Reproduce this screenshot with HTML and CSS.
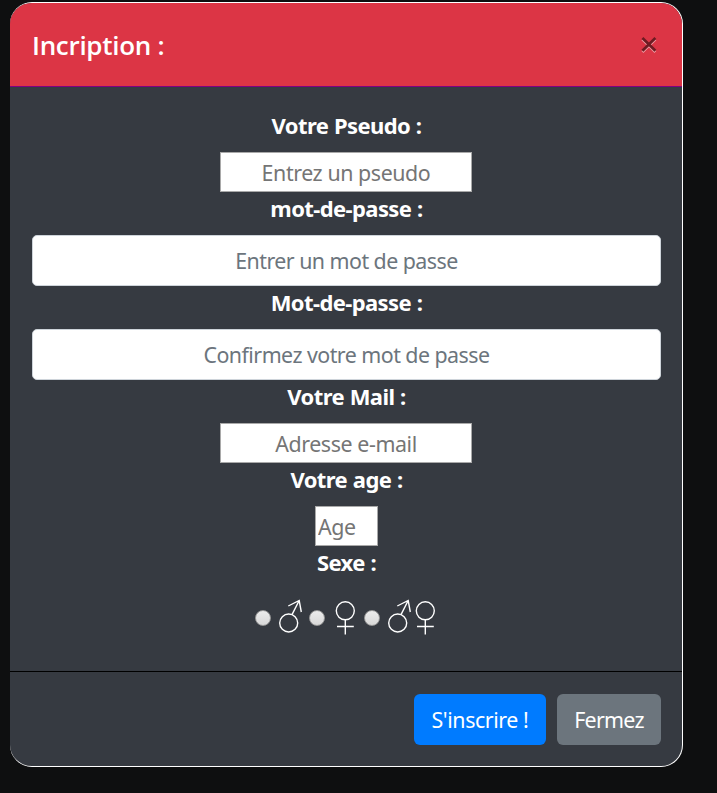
FILE: index.html
```html
<!DOCTYPE html>
<html lang="fr">
<head>
<meta charset="utf-8">
<title>Inscription</title>
<link rel="stylesheet" href="styles.css">
</head>
<body>
<form class="modal">
  <header class="modal-header">
    <h1 class="title">Incription :</h1>
    <button type="button" class="close" aria-label="Fermer">
      <svg width="18" height="18" viewBox="0 0 18 18"><path class="close-shade" d="M2.4 3.3 15.4 16M15.4 3.3 2.4 16"/><path class="close-cross" d="M2.4 2 15.4 14.7M15.4 2 2.4 14.7"/></svg>
    </button>
  </header>
  <div class="modal-body">
    <label class="label" for="pseudo">Votre Pseudo :</label>
    <input class="plain" id="pseudo" type="text" placeholder="Entrez un pseudo">
    <label class="label" for="pass">mot-de-passe :</label>
    <input class="control" id="pass" type="password" placeholder="Entrer un mot de passe">
    <label class="label" for="confirm">Mot-de-passe :</label>
    <input class="control" id="confirm" type="password" placeholder="Confirmez votre mot de passe">
    <label class="label" for="mail">Votre Mail :</label>
    <input class="plain" id="mail" type="email" placeholder="Adresse e-mail">
    <label class="label" for="age">Votre age :</label>
    <input class="plain age" id="age" type="text" placeholder="Age">
    <span class="label">Sexe :</span>
    <div class="choices">
      <input class="radio" type="radio" name="sexe" aria-label="Homme">
      <svg class="male" width="24" height="36" viewBox="0 0 24 36"><path d="M13 15.6 20.2 1.5M9.3 7 20.2 1.5 22.3 13"/><circle cx="9.7" cy="24" r="9"/></svg>
      <input class="radio" type="radio" name="sexe" aria-label="Femme">
      <svg class="female" width="20" height="36" viewBox="0 0 20 36"><circle cx="10.3" cy="11.8" r="9"/><path d="M10.3 20.8V35.5M2 27.5H18.8"/></svg>
      <input class="radio third" type="radio" name="sexe" aria-label="Autre">
      <svg class="male" width="24" height="36" viewBox="0 0 24 36"><path d="M13 15.6 20.2 1.5M9.3 7 20.2 1.5 22.3 13"/><circle cx="9.7" cy="24" r="9"/></svg>
      <svg class="female paired" width="20" height="36" viewBox="0 0 20 36"><circle cx="10.3" cy="11.8" r="9"/><path d="M10.3 20.8V35.5M2 27.5H18.8"/></svg>
    </div>
  </div>
  <footer class="modal-footer">
    <button class="btn primary" type="button">S'inscrire !</button>
    <button class="btn secondary" type="button">Fermez</button>
  </footer>
</form>
</body>
</html>
```
FILE: styles.css
```css
* { box-sizing: border-box; }
body {
  margin: 0;
  height: 793px;
  padding: 2px 34px 0 10px;
  overflow: hidden;
  background: #0e0f10;
  color: #fff;
  font-family: "Noto Sans", "Open Sans", sans-serif;
  font-size: 22px;
}
input, button {
  font: inherit;
  font-size: 21.4px;
  letter-spacing: -0.42px;
}
.modal {
  display: flex;
  flex-direction: column;
  width: 673px;
  height: 765px;
  border: 1px solid #fff;
  border-left-width: 0;
  border-radius: 22px;
  overflow: hidden;
  background: #363a41;
}
.modal-header {
  display: flex;
  justify-content: space-between;
  align-items: center;
  height: 84px;
  padding: 0 22px;
  border-bottom: 1px solid #800080;
  background: #dc3545;
}
.title {
  margin: 0;
  font-family: "Open Sans", sans-serif;
  font-size: 26px;
  font-weight: 600;
  line-height: 40px;
  letter-spacing: -0.3px;
}
.close { display: flex; padding: 0; border: 0; background: none; margin-right: 2px; }
.close path { fill: none; stroke-width: 2.7; }
.close-shade { stroke: #ee9aa2; }
.close-cross { stroke: #6e1b22; }
.modal-body {
  display: flex;
  flex-direction: column;
  align-items: center;
  height: 584px;
  padding: 22px 21px 0 22px;
}
.label {
  height: 43px;
  line-height: 33px;
  font-weight: 700;
  white-space: nowrap;
  letter-spacing: -0.6px;
  word-spacing: 0.6px;
}
.plain, .control { text-align: center; background: #fff; }
.plain { width: 252px; height: 40px; margin-right: 1px; padding: 2px; border: 1px solid #a9a9a9; }
.plain::placeholder { color: #757575; }
.control {
  width: 100%;
  height: 51px;
  padding: 0 16px;
  border: 1px solid #ced4da;
  border-radius: 5px;
  letter-spacing: -0.54px;
}
.control::placeholder { color: #6c757d; }
.age { width: 63px; margin-right: 0; text-align: left; }
.choices { display: flex; align-items: center; height: 36px; margin-top: 10px; margin-right: 4px; }
.choices svg { flex: none; fill: none; stroke: #fff; stroke-width: 1.4; }
.radio {
  appearance: none;
  flex: none;
  width: 16px;
  height: 16px;
  margin: 2px 0 0;
  border: 1px solid #999;
  border-radius: 50%;
  background: linear-gradient(#ececec, #d8d8d8);
}
.male { margin: 0 6px 0 8px; }
.female { margin-left: 10px; }
.third { margin-left: 9px; }
.female.paired { margin-left: -3px; }
.modal-footer {
  display: flex;
  justify-content: flex-end;
  gap: 11px;
  flex: 1;
  padding: 22px 21px 0;
  border-top: 1px solid #000;
}
.btn { height: 51px; padding: 0; border: 0; border-radius: 6px; color: #fff; white-space: nowrap; }
.primary { width: 132px; background: #007bff; }
.secondary { width: 104px; background: #6c757d; letter-spacing: -0.7px; }
```
